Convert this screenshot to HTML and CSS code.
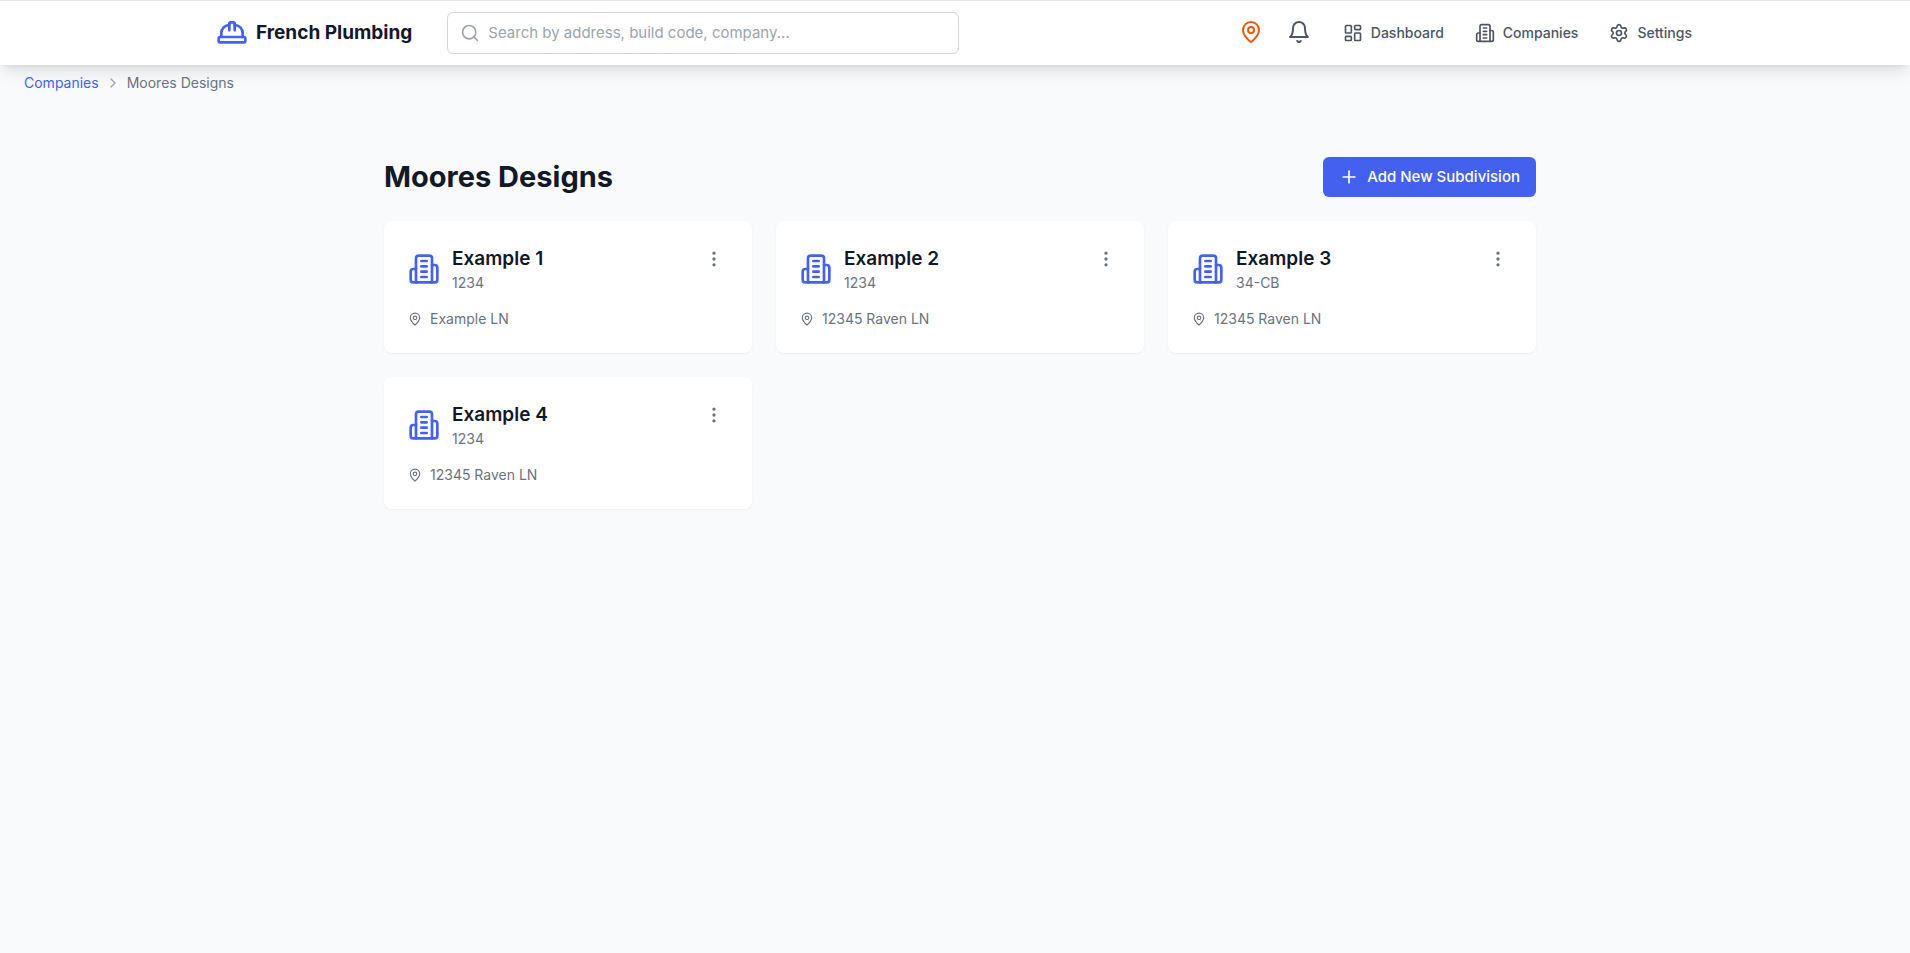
FILE: index.html
```
<!DOCTYPE html>
<html lang="en">
<head>
    <meta charset="UTF-8">
    <meta name="viewport" content="width=device-width, initial-scale=1.0">
    <title>French Plumbing - Moores Designs</title>
    <link rel="stylesheet" href="styles.css">
</head>
<body>
    <!-- Icon symbols -->
    <svg class="sprite" aria-hidden="true">
        <symbol id="hard-hat" viewBox="0 0 24 24">
            <path d="M2 18a1 1 0 0 0 1 1h18a1 1 0 0 0 1-1v-2a1 1 0 0 0-1-1H3a1 1 0 0 0-1 1v2z"/>
            <path d="M10 10V5a1 1 0 0 1 1-1h2a1 1 0 0 1 1 1v5"/>
            <path d="M4 15v-3a6 6 0 0 1 6-6"/>
            <path d="M14 6a6 6 0 0 1 6 6v3"/>
        </symbol>
        <symbol id="search-icon" viewBox="0 0 24 24">
            <circle cx="11" cy="11" r="8"/>
            <path d="m21 21-4.3-4.3"/>
        </symbol>
        <symbol id="map-pin" viewBox="0 0 24 24">
            <path d="M20 10c0 4.993-5.539 10.193-7.399 11.799a1 1 0 0 1-1.202 0C9.539 20.193 4 14.993 4 10a8 8 0 0 1 16 0"/>
            <circle cx="12" cy="10" r="3"/>
        </symbol>
        <symbol id="bell" viewBox="0 0 24 24">
            <path d="M6 8a6 6 0 0 1 12 0c0 7 3 9 3 9H3s3-2 3-9"/>
            <path d="M10.3 21a1.94 1.94 0 0 0 3.4 0"/>
        </symbol>
        <symbol id="layout-dashboard" viewBox="0 0 24 24">
            <rect width="7" height="9" x="3" y="3" rx="1"/>
            <rect width="7" height="5" x="14" y="3" rx="1"/>
            <rect width="7" height="9" x="14" y="12" rx="1"/>
            <rect width="7" height="5" x="3" y="16" rx="1"/>
        </symbol>
        <symbol id="building" viewBox="0 0 24 24">
            <path d="M6 22V4a2 2 0 0 1 2-2h8a2 2 0 0 1 2 2v18Z"/>
            <path d="M6 12H4a2 2 0 0 0-2 2v6a2 2 0 0 0 2 2h2"/>
            <path d="M18 9h2a2 2 0 0 1 2 2v9a2 2 0 0 1-2 2h-2"/>
            <path d="M10 6h4"/>
            <path d="M10 10h4"/>
            <path d="M10 14h4"/>
            <path d="M10 18h4"/>
        </symbol>
        <symbol id="settings" viewBox="0 0 24 24">
            <path d="M9.671 4.136a2.34 2.34 0 0 1 4.659 0 2.34 2.34 0 0 0 3.319 1.915 2.34 2.34 0 0 1 2.33 4.033 2.34 2.34 0 0 0 0 3.831 2.34 2.34 0 0 1-2.33 4.033 2.34 2.34 0 0 0-3.319 1.915 2.34 2.34 0 0 1-4.659 0 2.34 2.34 0 0 0-3.32-1.915 2.34 2.34 0 0 1-2.33-4.033 2.34 2.34 0 0 0 0-3.831A2.34 2.34 0 0 1 6.35 6.051a2.34 2.34 0 0 0 3.319-1.915"/>
            <circle cx="12" cy="12" r="3"/>
        </symbol>
        <symbol id="chevron-right" viewBox="0 0 24 24">
            <path d="m9 18 6-6-6-6"/>
        </symbol>
        <symbol id="plus" viewBox="0 0 24 24">
            <path d="M5 12h14"/>
            <path d="M12 5v14"/>
        </symbol>
        <symbol id="more-vertical" viewBox="0 0 24 24">
            <circle cx="12" cy="12" r="1"/>
            <circle cx="12" cy="5" r="1"/>
            <circle cx="12" cy="19" r="1"/>
        </symbol>
    </svg>

    <header class="header">
        <div class="header-inner">
            <a class="logo" href="#">
                <svg class="icon icon-lg"><use href="#hard-hat"/></svg>
                <span>French Plumbing</span>
            </a>
            <label class="search-bar">
                <svg class="icon icon-md"><use href="#search-icon"/></svg>
                <input type="text" aria-label="Search" placeholder="Search by address, build code, company...">
            </label>
            <div class="header-actions">
                <button class="icon-button pin" type="button" aria-label="Locations">
                    <svg class="icon"><use href="#map-pin"/></svg>
                </button>
                <button class="icon-button" type="button" aria-label="Notifications">
                    <svg class="icon"><use href="#bell"/></svg>
                </button>
            </div>
            <nav class="nav">
                <a href="#"><svg class="icon icon-md"><use href="#layout-dashboard"/></svg>Dashboard</a>
                <a href="#"><svg class="icon icon-md"><use href="#building"/></svg>Companies</a>
                <a href="#"><svg class="icon icon-md"><use href="#settings"/></svg>Settings</a>
            </nav>
        </div>
    </header>

    <nav class="breadcrumb" aria-label="Breadcrumb">
        <a href="#">Companies</a>
        <svg class="icon icon-sm"><use href="#chevron-right"/></svg>
        <span>Moores Designs</span>
    </nav>

    <main class="main">
        <div class="page-title">
            <h1>Moores Designs</h1>
            <button class="add-button" type="button">
                <svg class="icon icon-md"><use href="#plus"/></svg>
                Add New Subdivision
            </button>
        </div>

        <div class="card-grid">
            <article class="card">
                <div class="card-top">
                    <svg class="icon icon-lg"><use href="#building"/></svg>
                    <div class="card-name">
                        <h2>Example 1</h2>
                        <p>1234</p>
                    </div>
                    <button class="more-button" type="button" aria-label="More options">
                        <svg class="icon icon-md"><use href="#more-vertical"/></svg>
                    </button>
                </div>
                <p class="card-address"><svg class="icon icon-xs"><use href="#map-pin"/></svg>Example LN</p>
            </article>
            <article class="card">
                <div class="card-top">
                    <svg class="icon icon-lg"><use href="#building"/></svg>
                    <div class="card-name">
                        <h2>Example 2</h2>
                        <p>1234</p>
                    </div>
                    <button class="more-button" type="button" aria-label="More options">
                        <svg class="icon icon-md"><use href="#more-vertical"/></svg>
                    </button>
                </div>
                <p class="card-address"><svg class="icon icon-xs"><use href="#map-pin"/></svg>12345 Raven LN</p>
            </article>
            <article class="card">
                <div class="card-top">
                    <svg class="icon icon-lg"><use href="#building"/></svg>
                    <div class="card-name">
                        <h2>Example 3</h2>
                        <p>34-CB</p>
                    </div>
                    <button class="more-button" type="button" aria-label="More options">
                        <svg class="icon icon-md"><use href="#more-vertical"/></svg>
                    </button>
                </div>
                <p class="card-address"><svg class="icon icon-xs"><use href="#map-pin"/></svg>12345 Raven LN</p>
            </article>
            <article class="card">
                <div class="card-top">
                    <svg class="icon icon-lg"><use href="#building"/></svg>
                    <div class="card-name">
                        <h2>Example 4</h2>
                        <p>1234</p>
                    </div>
                    <button class="more-button" type="button" aria-label="More options">
                        <svg class="icon icon-md"><use href="#more-vertical"/></svg>
                    </button>
                </div>
                <p class="card-address"><svg class="icon icon-xs"><use href="#map-pin"/></svg>12345 Raven LN</p>
            </article>
        </div>
    </main>
</body>
</html>
```
FILE: styles.css
```
* {
    box-sizing: border-box;
}

body {
    margin: 0;
    font-family: Inter, "Liberation Sans", sans-serif;
    font-size: 14px;
    line-height: 20px;
    background-color: #f9fafc;
    color: #6b7280;
}

h1, h2, p {
    margin: 0;
}

a {
    color: inherit;
    text-decoration: none;
}

button, input {
    font: inherit;
    color: inherit;
}

button {
    border: none;
    background: none;
    cursor: pointer;
}

.sprite {
    display: none;
}

.icon {
    display: block;
    flex-shrink: 0;
    width: 24px;
    height: 24px;
    fill: none;
    stroke: currentColor;
    stroke-width: 2;
    stroke-linecap: round;
    stroke-linejoin: round;
}

.icon-xs {
    width: 14px;
    height: 14px;
}

.icon-sm {
    width: 16px;
    height: 16px;
}

.icon-md {
    width: 20px;
    height: 20px;
}

.icon-lg {
    width: 32px;
    height: 32px;
}

/* Header */
.header {
    border-top: 1px solid #e5e7eb;
    background-color: #fff;
    box-shadow: 0 10px 15px -3px rgba(0, 0, 0, 0.1), 0 4px 6px -4px rgba(0, 0, 0, 0.1);
}

.header-inner {
    display: flex;
    align-items: center;
    max-width: 1478px;
    height: 64px;
    margin: 0 auto;
    padding-right: 2px;
}

.logo {
    display: flex;
    align-items: center;
    gap: 8px;
    margin-right: 35px;
    font-size: 19px;
    font-weight: 700;
    line-height: 28px;
    color: #111827;
}

.logo .icon {
    color: #4361ee;
}

.search-bar {
    display: flex;
    align-items: center;
    gap: 8px;
    width: 512px;
    height: 42px;
    padding: 0 12px;
    border: 1px solid #d1d5db;
    border-radius: 6px;
    color: #9ca3af;
}

.search-bar input {
    flex: 1;
    padding: 0;
    border: none;
    outline: none;
    background: none;
    font-size: 15px;
    color: #111827;
}

.search-bar input::placeholder {
    color: #9ca3af;
}

.header-actions {
    display: flex;
    gap: 24px;
    margin-left: auto;
    margin-right: 32px;
    padding-bottom: 2px;
    color: #4b5563;
}

.icon-button {
    padding: 0;
}

.pin {
    color: #ea580c;
}

.nav {
    display: flex;
    gap: 31px;
    font-weight: 500;
    color: #4b5563;
}

.nav a {
    display: flex;
    align-items: center;
    gap: 8px;
}

/* Breadcrumb */
.breadcrumb {
    display: flex;
    align-items: center;
    gap: 6px;
    padding: 8px 24px;
}

.breadcrumb a {
    color: #4361ee;
}

.breadcrumb .icon {
    color: #9ca3af;
}

/* Main */
.main {
    max-width: 1162px;
    margin: 0 auto;
    padding: 56px 0 24px 10px;
}

.page-title {
    display: flex;
    justify-content: space-between;
    align-items: center;
    margin-bottom: 24px;
}

.page-title h1 {
    font-size: 29px;
    font-weight: 700;
    line-height: 36px;
    color: #111827;
}

.add-button {
    display: flex;
    align-items: center;
    gap: 8px;
    height: 40px;
    padding: 0 16px;
    border-radius: 6px;
    background-color: #4361ee;
    font-size: 15px;
    font-weight: 500;
    color: #fff;
}

.card-grid {
    display: grid;
    grid-template-columns: repeat(3, 1fr);
    gap: 24px;
}

.card {
    padding: 24px;
    border-radius: 8px;
    background-color: #fff;
    box-shadow: 0 1px 2px rgba(0, 0, 0, 0.05);
}

.card-top {
    display: flex;
    align-items: center;
    gap: 12px;
    margin-bottom: 16px;
}

.card-top > .icon {
    color: #4361ee;
}

.card-name {
    flex: 1;
}

.card-name h2 {
    font-size: 19px;
    font-weight: 600;
    line-height: 28px;
    color: #111827;
}

.more-button {
    align-self: flex-start;
    padding: 4px;
}

.card-address {
    display: flex;
    align-items: center;
    gap: 8px;
}
```
